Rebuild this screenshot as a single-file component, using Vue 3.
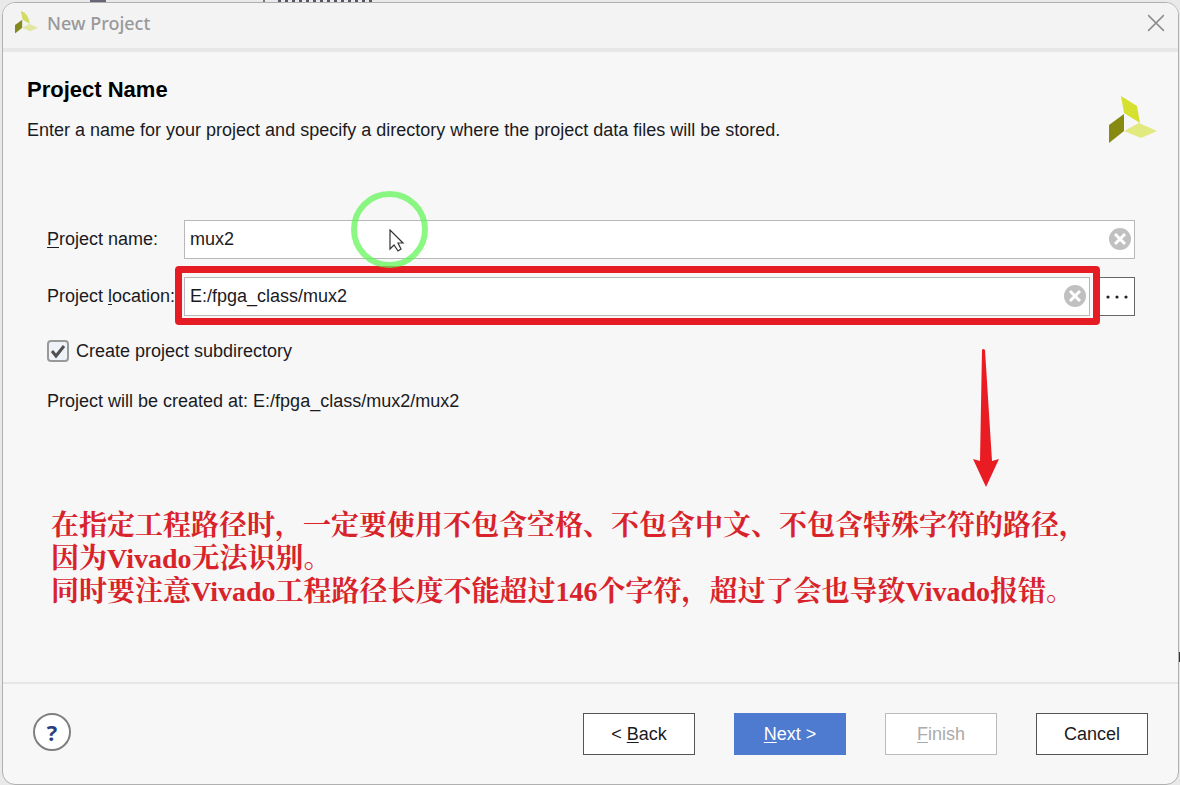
<script setup>
import { ref } from 'vue'

const projectName = ref('mux2')
const projectLocation = ref('E:/fpga_class/mux2')
const createSubdirectory = ref(true)
</script>

<template>
  <div class="desktop">
    <div class="backdrop" aria-hidden="true">
      <i class="mark m1"></i><i class="mark m2"></i><i class="mark m3"></i><i class="mark m4"></i>
    </div>
    <main class="dialog">
      <header class="titlebar">
        <svg class="logo-small" viewBox="0 0 48 48" aria-hidden="true">
          <path d="M12 0Q28 4 31 27L16 18Z" fill="#d3dc62" />
          <path d="M0 29 15 18V35L0 47Z" fill="#848820" />
          <path d="M15 35 30 27 48 35 32 42Z" fill="#e2e7a0" />
        </svg>
        <span class="title">New Project</span>
        <button class="close" type="button" aria-label="Close">
          <svg viewBox="0 0 16 16"><path d="M1 1 15 15M15 1 1 15" /></svg>
        </button>
      </header>

      <section class="content">
        <div class="intro">
          <div>
            <h1>Project Name</h1>
            <p>Enter a name for your project and specify a directory where the project data files will be stored.</p>
          </div>
          <svg class="logo" viewBox="0 0 48 48" aria-hidden="true">
            <path d="M12 0 28 10 31 27 15 17Z" fill="#d5e02f" />
            <path d="M0 29 15 18V35L0 47Z" fill="#868a10" />
            <path d="M15 35 30 27 48 35 32 42Z" fill="#e1e97f" />
          </svg>
        </div>

        <form class="form" @submit.prevent>
          <div class="row">
            <label for="name"><u>P</u>roject name:</label>
            <div class="field">
              <input id="name" v-model="projectName" type="text" />
              <button class="clear" type="button" aria-label="Clear name" @click="projectName = ''">
                <svg viewBox="0 0 22 22"><circle cx="11" cy="11" r="11" /><path d="M6 6 16 16M16 6 6 16" /></svg>
              </button>
              <span class="ring"></span>
              <svg class="cursor" viewBox="0 0 16 24" aria-hidden="true">
                <path d="M1 1V20L5 16 9 22 12 20 9 14H14Z" />
              </svg>
            </div>
          </div>
          <div class="row">
            <label for="location">Project <u>l</u>ocation:</label>
            <div class="field">
              <input id="location" v-model="projectLocation" type="text" />
              <button class="clear" type="button" aria-label="Clear location" @click="projectLocation = ''">
                <svg viewBox="0 0 22 22"><circle cx="11" cy="11" r="11" /><path d="M6 6 16 16M16 6 6 16" /></svg>
              </button>
              <span class="frame"></span>
            </div>
            <button class="browse" type="button" aria-label="Browse">
              <svg viewBox="0 0 22 4"><circle cx="2" cy="2" r="1.6" /><circle cx="11" cy="2" r="1.6" /><circle cx="20" cy="2" r="1.6" /></svg>
            </button>
            <svg class="arrow" viewBox="0 0 28 140" aria-hidden="true">
              <path d="M10 2Q11 0 13 2L20 113 27 111 14 139 1 111 8 113Z" />
            </svg>
          </div>
          <label class="check">
            <input v-model="createSubdirectory" type="checkbox" />
            <span class="box">
              <svg v-if="createSubdirectory" viewBox="0 0 18 18"><path d="M3 9 7 14 15 4" /></svg>
            </span>
            Create project subdirectory
          </label>
          <p class="result">Project will be created at: E:/fpga_class/mux2/mux2</p>
        </form>

        <p class="note" lang="zh-CN">
          在指定工程路径时，一定要使用不包含空格、不包含中文、不包含特殊字符的路径，<br />
          因为Vivado无法识别。<br />
          同时要注意Vivado工程路径长度不能超过146个字符，超过了会也导致Vivado报错。
        </p>
      </section>

      <footer class="footer">
        <button class="help" type="button" aria-label="Help">?</button>
        <div class="actions">
          <button type="button">&lt; <u>B</u>ack</button>
          <button class="primary" type="button"><u>N</u>ext &gt;</button>
          <button type="button" disabled><u>F</u>inish</button>
          <button type="button">Cancel</button>
        </div>
      </footer>
    </main>
  </div>
</template>

<style>
body {
  margin: 0;
  background: #e9e9e9;
}
</style>

<style scoped>
* {
  box-sizing: border-box;
}
.desktop {
  position: relative;
  display: flex;
  min-height: 100vh;
  padding: 2px 0 0 2px;
  font-family: "Liberation Sans", Arial, sans-serif;
  font-size: 18px;
  line-height: 22px;
  color: #1a1a22;
}
.mark {
  position: absolute;
  top: 0;
  height: 4px;
}
.m1 {
  left: 90px;
  width: 16px;
  background: #667;
}
.m2 {
  left: 263px;
  width: 2px;
  background: #777;
}
.m3 {
  left: 278px;
  width: 94px;
  background: repeating-linear-gradient(90deg, #556 0 3px, #e9e9e9 3px 7px);
}
.m4 {
  top: 652px;
  right: 0;
  width: 4px;
  height: 10px;
  background: #333;
}
.dialog {
  position: relative;
  display: flex;
  flex: 1;
  flex-direction: column;
  border: 1px solid #b0b0b0;
  border-radius: 13px;
  background: #f7f7f7;
  margin-right: 1px;
}
.titlebar {
  display: flex;
  align-items: center;
  height: 49px;
  padding: 0 13px 6px 12px;
  border-bottom: 4px solid #e7e7e7;
  border-radius: 12px 12px 0 0;
  background: #f3f3f3;
}
.logo-small {
  width: 23px;
  height: 23px;
}
.title {
  margin-left: 9px;
  font-family: "Noto Sans", "Open Sans", sans-serif;
  font-size: 18px;
  font-weight: 500;
  color: #999;
}
button {
  font: inherit;
  color: inherit;
  padding: 0;
  border: 0;
  background: none;
}
.close {
  display: grid;
  margin-left: auto;
}
.close svg {
  width: 18px;
  height: 18px;
  fill: none;
  stroke: #8c8c8c;
  stroke-width: 1.3;
}
.content {
  flex: 1;
}
.intro {
  display: flex;
  justify-content: space-between;
  padding: 26px 21px 0 24px;
}
h1 {
  margin: 0;
  font-size: 22px;
  line-height: 24px;
  color: #000;
}
p {
  margin: 0;
}
.intro p {
  margin-top: 17px;
}
.logo {
  width: 48px;
  height: 48px;
  margin-top: 18px;
}
.form {
  display: flex;
  flex-direction: column;
  padding: 76px 43px 0 44px;
}
.row {
  position: relative;
  display: flex;
  align-items: center;
  height: 39px;
  margin-bottom: 18px;
}
.row label {
  flex: 0 0 137px;
  padding-bottom: 2px;
  white-space: nowrap;
}
u {
  text-underline-offset: 2px;
}
.field {
  position: relative;
  flex: 1;
  height: 39px;
}
.field input {
  width: 100%;
  height: 100%;
  padding: 0 34px 0 5px;
  border: 1px solid #b8b8b8;
  background: #fff;
  font: inherit;
  color: inherit;
  outline: 0;
}
.clear {
  position: absolute;
  top: 8px;
  right: 4px;
  width: 22px;
  height: 22px;
}
.clear svg {
  display: block;
  fill: #c0c0c0;
  stroke: none;
}
.clear path {
  stroke: #fff;
  stroke-width: 3;
}
.ring {
  position: absolute;
  z-index: 1;
  top: -29px;
  left: 167px;
  width: 77px;
  height: 77px;
  border: 6px solid rgba(90, 245, 80, 0.7);
  border-radius: 50%;
  pointer-events: none;
}
.cursor {
  position: absolute;
  top: 9px;
  left: 205px;
  width: 16px;
  height: 24px;
  fill: #fff;
  stroke: #333;
  stroke-width: 1.2;
}
.frame {
  position: absolute;
  inset: -11px -10px -9px -9px;
  border: 7px solid #e51c24;
  border-radius: 4px;
  pointer-events: none;
}
.browse {
  display: grid;
  place-items: center;
  width: 36px;
  height: 39px;
  margin-left: 9px;
  border: 1px solid #666;
  border-left: 0;
  background: #fff;
}
.browse svg {
  width: 22px;
  height: 4px;
  fill: #222;
}
.arrow {
  position: absolute;
  z-index: 1;
  top: 71px;
  right: 135px;
  width: 28px;
  height: 140px;
  fill: #e91c24;
}
.check {
  position: relative;
  display: flex;
  align-items: center;
  align-self: flex-start;
  margin-top: 6px;
}
.check input {
  position: absolute;
  width: 22px;
  height: 22px;
  margin: 0;
  opacity: 0;
}
.box {
  display: grid;
  place-items: center;
  width: 22px;
  height: 22px;
  margin-right: 7px;
  border: 2px solid #999;
  border-radius: 4px;
  background: #eef3f9;
}
.box svg {
  width: 18px;
  height: 18px;
  fill: none;
  stroke: #505050;
  stroke-width: 3;
}
.result {
  margin-top: 28px;
}
.note {
  padding: 97px 0 24px 48px;
  font-family: "Liberation Serif", "Noto Serif CJK SC", "Noto Sans CJK SC", serif;
  font-size: 28px;
  font-weight: 700;
  line-height: 33px;
  color: #d9232b;
  white-space: nowrap;
}
.footer {
  display: flex;
  align-items: center;
  justify-content: space-between;
  height: 102px;
  padding: 0 30px;
  border-top: 2px solid #e6e6e6;
}
.help {
  width: 38px;
  height: 38px;
  margin-bottom: 4px;
  border: 2px solid #808080;
  border-radius: 50%;
  background: #fff;
  font-family: "Open Sans", sans-serif;
  font-size: 22px;
  font-weight: 700;
  color: #2b3f80;
}
.actions {
  display: flex;
  gap: 39px;
}
.actions button {
  width: 112px;
  height: 42px;
  border: 1px solid #555;
  background: #fff;
}
.actions .primary {
  border-color: #4e7bd0;
  background: #4e7bd0;
  color: #fff;
}
.actions button:disabled {
  border-color: #bbb;
  color: #aaa;
}
</style>
